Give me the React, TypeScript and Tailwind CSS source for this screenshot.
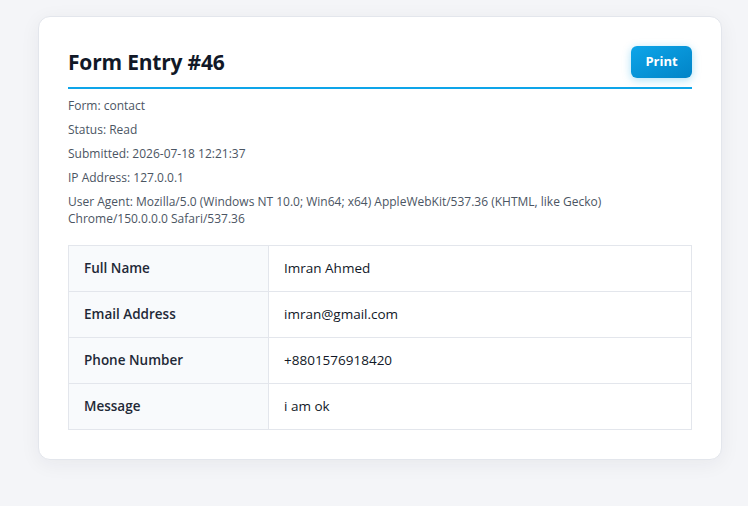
import React from 'react';

const fields = [
  { label: 'Full Name', value: 'Imran Ahmed' },
  { label: 'Email Address', value: 'imran@gmail.com' },
  { label: 'Phone Number', value: '+8801576918420' },
  { label: 'Message', value: 'i am ok' },
];

const meta = [
  'Form: contact',
  'Status: Read',
  'Submitted: 2026-07-18 12:21:37',
  'IP Address: 127.0.0.1',
  'User Agent: Mozilla/5.0 (Windows NT 10.0; Win64; x64) AppleWebKit/537.36 (KHTML, like Gecko) Chrome/150.0.0.0 Safari/537.36',
];

export default function App() {
  return (
    <div className="min-h-[506px] bg-[#f4f5f8] pt-4 pb-10 font-['Open_Sans',sans-serif]">
      <div className="ml-[38px] w-[684px] rounded-xl border border-[#e3e6ec] bg-white px-[29px] pt-[29px] pb-[29px] shadow-[0_4px_20px_rgba(30,41,59,0.06)]">
        <div className="flex items-center justify-between border-b-2 border-[#0ea5e9] pb-[9px]">
          <h1 className="text-[21px] font-bold leading-8 tracking-[-0.2px] text-[#111827]">Form Entry #46</h1>
          <button className="h-8 w-[61px] rounded-md bg-gradient-to-br from-[#0ea5e9] to-[#0284c7] text-[13px] font-bold text-white shadow-[0_2px_8px_rgba(14,165,233,0.35)]">
            Print
          </button>
        </div>

        <div className="mt-2 flex flex-col gap-[7px] text-[12px] leading-[17px] text-[#4b5563]">
          {meta.map((m) => (
            <p key={m}>{m}</p>
          ))}
        </div>

        <table className="mt-[18px] w-full border-collapse text-[13.5px]">
          <tbody>
            {fields.map((f) => (
              <tr key={f.label} className="h-[46px]">
                <td className="w-[200px] border border-[#e3e6ec] bg-[#f8fafc] px-[15px] font-semibold text-[#1f2937]">
                  {f.label}
                </td>
                <td className="border border-[#e3e6ec] px-[15px] text-[#111827]">{f.value}</td>
              </tr>
            ))}
          </tbody>
        </table>
      </div>
    </div>
  );
}
